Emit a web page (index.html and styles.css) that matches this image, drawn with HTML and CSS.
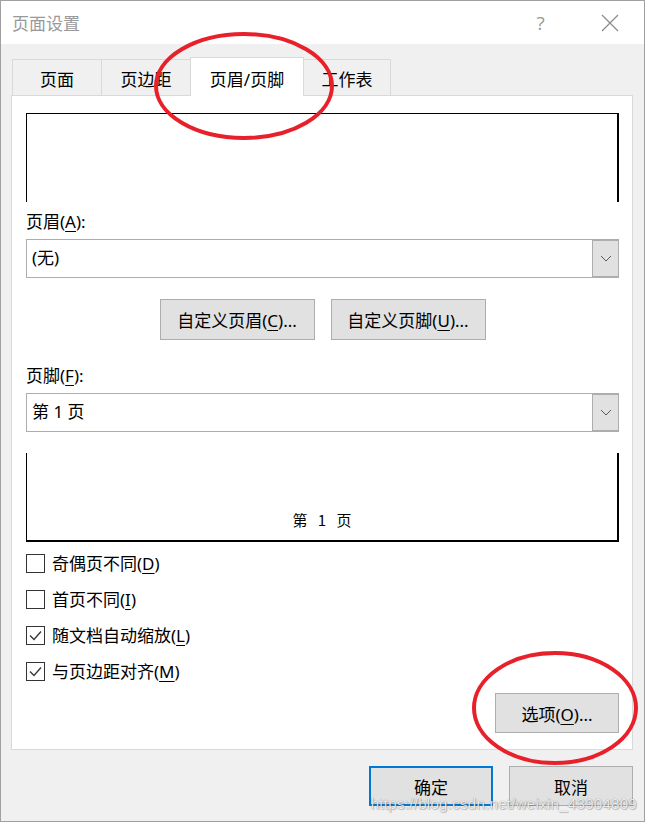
FILE: index.html
```html
<!DOCTYPE html>
<html lang="zh-CN">
<head>
  <meta charset="UTF-8" />
  <title>页面设置</title>
  <link rel="stylesheet" href="styles.css">
</head>
<body>

  <div class="window">
    <div class="titlebar">
      <div class="title">页面设置</div>
      <div class="title-btn help">?</div>
      <div class="title-btn close">
        <svg width="18" height="18" viewBox="0 0 18 18"><path d="M1 1 L17 17 M17 1 L1 17" stroke="#8a8a8a" stroke-width="1.2" fill="none"/></svg>
      </div>
    </div>

    <div class="content">
      <div class="tabs">
        <div class="tab">页面</div>
        <div class="tab">页边距</div>
        <div class="tab active">页眉/页脚</div>
        <div class="tab">工作表</div>
      </div>

      <div class="panel">
        <div class="preview preview-header"></div>

        <div class="field-label">页眉(<u>A</u>):</div>
        <div class="select">
          <span class="select-value">(无)</span>
          <span class="select-arrow">
            <svg width="12" height="7" viewBox="0 0 12 7"><path d="M1 1 L6 6 L11 1" stroke="#5a5a5a" stroke-width="1" fill="none"/></svg>
          </span>
        </div>

        <div class="custom-row">
          <button class="btn btn-custom">自定义页眉(<u>C</u>)...</button>
          <button class="btn btn-custom">自定义页脚(<u>U</u>)...</button>
        </div>

        <div class="field-label label-footer">页脚(<u>F</u>):</div>
        <div class="select">
          <span class="select-value">第 1 页</span>
          <span class="select-arrow">
            <svg width="12" height="7" viewBox="0 0 12 7"><path d="M1 1 L6 6 L11 1" stroke="#5a5a5a" stroke-width="1" fill="none"/></svg>
          </span>
        </div>

        <div class="preview preview-footer">
          <span class="preview-text">第 1 页</span>
        </div>

        <div class="checks">
          <label class="check"><span class="box"></span><span>奇偶页不同(<u>D</u>)</span></label>
          <label class="check"><span class="box"></span><span>首页不同(<u>I</u>)</span></label>
          <label class="check"><span class="box"><svg width="15" height="15" viewBox="0 0 15 15"><path d="M2 7.5 L6 11.5 L13 3.5" stroke="#333" stroke-width="1.3" fill="none"/></svg></span><span>随文档自动缩放(<u>L</u>)</span></label>
          <label class="check"><span class="box"><svg width="15" height="15" viewBox="0 0 15 15"><path d="M2 7.5 L6 11.5 L13 3.5" stroke="#333" stroke-width="1.3" fill="none"/></svg></span><span>与页边距对齐(<u>M</u>)</span></label>
        </div>

        <div class="options-row">
          <button class="btn btn-options">选项(<u>O</u>)...</button>
        </div>
      </div>

      <div class="footer-buttons">
        <button class="btn btn-dialog btn-default">确定</button>
        <button class="btn btn-dialog">取消</button>
      </div>
    </div>

    <!-- annotations drawn on the screenshot -->
    <svg class="marks" width="645" height="822" viewBox="0 0 645 822">
      <ellipse cx="244" cy="86" rx="88" ry="52" stroke="#e8202a" stroke-width="4" fill="none"/>
      <ellipse cx="555" cy="708" rx="81" ry="55" stroke="#e8202a" stroke-width="4" fill="none"/>
    </svg>

    <div class="watermark">https://blog.csdn.net/weixin_43904809</div>
  </div>

</body>
</html>
```

FILE: styles.css
```css
* {
  box-sizing: border-box;
}
body {
  margin: 0;
  font-family: "Noto Sans", "Noto Sans CJK SC", sans-serif;
  font-size: 17px;
  color: #000;
  background: #fff;
}
u {
  text-decoration-thickness: 1px;
  text-underline-offset: 3px;
}

.window {
  position: relative;
  width: 645px;
  height: 822px;
  border: 1px solid #a0a0a0;
  background: #f0f0f0;
  overflow: hidden;
}

.titlebar {
  height: 43px;
  background: #fff;
  display: flex;
  align-items: center;
}
.title {
  flex: 1;
  padding-left: 11px;
  font-size: 17px;
  color: #999;
}
.title-btn {
  width: 69px;
  height: 43px;
  display: flex;
  align-items: center;
  justify-content: center;
  color: #999;
}
.help {
  font-size: 19px;
  font-family: "Open Sans", "Noto Sans", sans-serif;
}

.content {
  padding: 13px 11px 0 10px;
}

.tabs {
  display: flex;
  align-items: flex-end;
  height: 38px;
  margin-left: 1px;
}
.tab {
  width: 90px;
  height: 36px;
  margin-left: -1px;
  border: 1px solid #d9d9d9;
  border-bottom: none;
  background: #f0f0f0;
  text-align: center;
  line-height: 28px;
  padding-top: 6px;
}
.tab:first-child {
  margin-left: 0;
}
.tab:last-child {
  width: 88px;
}
.tab.active {
  position: relative;
  z-index: 1;
  width: 114px;
  height: 39px;
  margin-bottom: -1px;
  padding-top: 8px;
  background: #fff;
}

.panel {
  height: 655px;
  background: #fff;
  border: 1px solid #d9d9d9;
  padding: 17px 13px 0 14px;
}

.preview {
  position: relative;
  height: 89px;
  border-left: 1px solid #000;
  border-right: 2px solid #000;
}
.preview-header {
  border-top: 1px solid #000;
}
.preview-footer {
  margin-top: 21px;
  border-bottom: 2px solid #000;
  display: flex;
  align-items: flex-end;
  justify-content: center;
  padding-bottom: 10px;
}
.preview-text {
  font-family: "Noto Sans CJK SC", sans-serif;
  font-size: 15px;
  line-height: 20px;
  word-spacing: 7px;
}

.field-label {
  margin-top: 8px;
  line-height: 24px;
}
.label-footer {
  margin-top: 24px;
}

.select {
  display: flex;
  height: 39px;
  margin-top: 5px;
  border: 1px solid #adadad;
  background: #fff;
}
.select-value {
  flex: 1;
  padding-left: 5px;
  line-height: 35px;
}
.select-arrow {
  width: 26px;
  background: #e1e1e1;
  border: 1px solid #adadad;
  border-right: none;
  display: flex;
  align-items: center;
  justify-content: center;
}

.btn {
  font-family: inherit;
  font-size: 17px;
  color: #000;
  background: #e1e1e1;
  border: 1px solid #adadad;
  padding: 0;
}

.custom-row {
  display: flex;
  justify-content: center;
  gap: 16px;
  margin-top: 21px;
}
.btn-custom {
  width: 155px;
  height: 41px;
}

.checks {
  display: flex;
  flex-direction: column;
  gap: 17px;
  margin-top: 12px;
}
.check {
  display: flex;
  align-items: center;
  gap: 7px;
  height: 19px;
  line-height: 19px;
}
.box {
  flex: none;
  width: 19px;
  height: 19px;
  border: 1px solid #333;
  background: #fff;
  display: flex;
  align-items: center;
  justify-content: center;
}

.options-row {
  display: flex;
  justify-content: flex-end;
  margin-top: 12px;
}
.btn-options {
  width: 124px;
  height: 40px;
}

.footer-buttons {
  display: flex;
  justify-content: flex-end;
  gap: 16px;
  margin-top: 16px;
}
.btn-dialog {
  width: 124px;
  height: 40px;
}
.btn-default {
  border: 2px solid #0078d7;
}

.marks {
  position: absolute;
  left: -1px;
  top: -1px;
  pointer-events: none;
}

.watermark {
  position: absolute;
  right: 7px;
  bottom: 9px;
  font-family: "Liberation Sans", Arial, sans-serif;
  font-size: 15px;
  color: rgba(255, 255, 255, 0.85);
  text-shadow: 0 0 1px rgba(0, 0, 0, 0.45), 1px 1px 1px rgba(0, 0, 0, 0.2);
  letter-spacing: 0.3px;
}
```
